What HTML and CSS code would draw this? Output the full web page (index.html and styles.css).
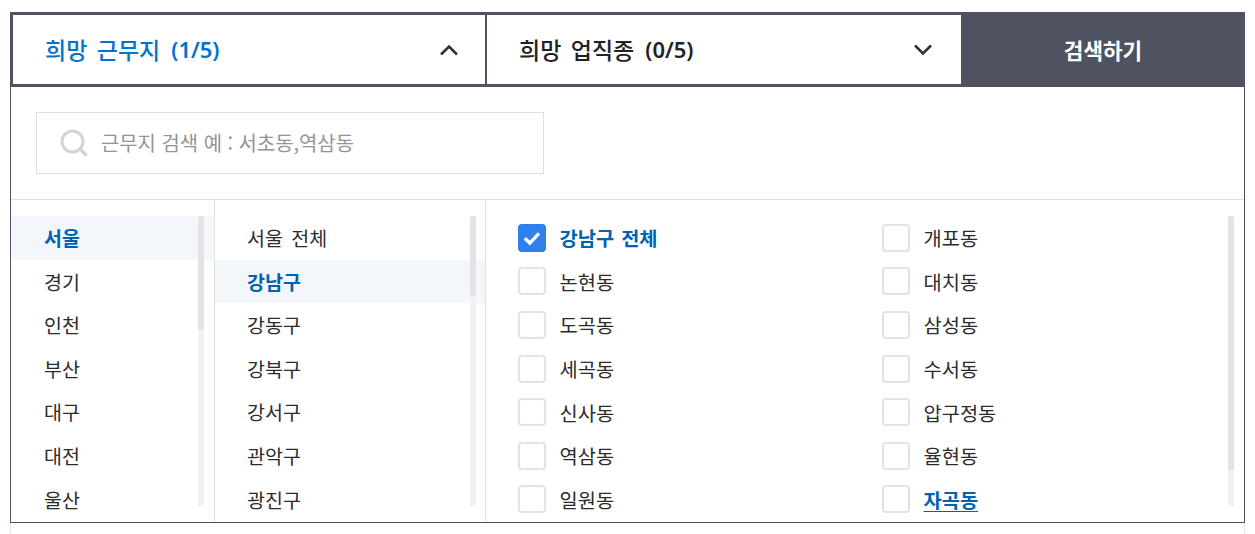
FILE: index.html
```html
<!DOCTYPE html>
<html lang="ko">
<head>
<meta charset="utf-8">
<title>희망 근무지 검색</title>
<link rel="stylesheet" href="styles.css">
</head>
<body>
<div class="finder">
  <div class="bar">
    <button class="tab tab-open" type="button"><span class="tab-label">희망 근무지<span class="count">(1/5)</span></span>
      <svg class="chev" viewBox="0 0 20 12" width="20" height="12"><path d="M2 10.5 10 2.5l8 8" fill="none" stroke="#333" stroke-width="2.6"/></svg></button>
    <button class="tab tab-closed" type="button"><span class="tab-label">희망 업직종<span class="count">(0/5)</span></span>
      <svg class="chev" viewBox="0 0 20 12" width="20" height="12"><path d="M2 1.5l8 8 8-8" fill="none" stroke="#333" stroke-width="2.6"/></svg></button>
    <button class="go" type="button">검색하기</button>
  </div>
  <div class="panel">
    <div class="search-row">
      <label class="search">
        <svg viewBox="0 0 28 28" width="28" height="28"><circle cx="12.5" cy="12.5" r="10.5" fill="none" stroke="#d4d4d4" stroke-width="3"/><path d="M20 20l6.5 6.5" stroke="#d4d4d4" stroke-width="3.4" fill="none"/></svg>
        <input class="search-input" type="text" placeholder="근무지 검색 예 : 서초동,역삼동">
      </label>
    </div>
    <div class="cols">
      <div class="col col-city">
        <ul class="list">
          <li class="row on">서울</li><li class="row">경기</li><li class="row">인천</li><li class="row">부산</li><li class="row">대구</li><li class="row">대전</li><li class="row">울산</li>
        </ul>
        <div class="track track-city"><div class="thumb thumb-city"></div></div>
      </div>
      <div class="col col-gu">
        <ul class="list">
          <li class="row">서울 전체</li><li class="row on">강남구</li><li class="row">강동구</li><li class="row">강북구</li><li class="row">강서구</li><li class="row">관악구</li><li class="row">광진구</li>
        </ul>
        <div class="track track-gu"><div class="thumb thumb-gu"></div></div>
      </div>
      <div class="col col-dong">
        <ul class="dong-grid">
          <li class="dong sel"><span class="box checked"><svg viewBox="0 0 28 28" width="28" height="28"><path d="M6.8 14.3l5 4.8 9.2-9.8" fill="none" stroke="#fff" stroke-width="3.4"/></svg></span>강남구 전체</li>
          <li class="dong"><span class="box"></span>개포동</li>
          <li class="dong"><span class="box"></span>논현동</li>
          <li class="dong"><span class="box"></span>대치동</li>
          <li class="dong"><span class="box"></span>도곡동</li>
          <li class="dong"><span class="box"></span>삼성동</li>
          <li class="dong"><span class="box"></span>세곡동</li>
          <li class="dong"><span class="box"></span>수서동</li>
          <li class="dong"><span class="box"></span>신사동</li>
          <li class="dong"><span class="box"></span>압구정동</li>
          <li class="dong"><span class="box"></span>역삼동</li>
          <li class="dong"><span class="box"></span>율현동</li>
          <li class="dong"><span class="box"></span>일원동</li>
          <li class="dong link"><span class="box"></span><span class="link-text">자곡동</span></li>
        </ul>
        <div class="track track-dong"><div class="thumb thumb-dong"></div></div>
      </div>
    </div>
  </div>
  <div class="after"></div>
</div>
</body>
</html>
```
FILE: styles.css
```css
* { box-sizing: border-box; }
html, body { margin: 0; padding: 0; background: #fff; height: 534px; overflow: hidden; }
body {
  padding: 12px 10px 0;
  font-family: "Noto Sans CJK KR", "Noto Sans", sans-serif;
  color: #333;
}
ul { list-style: none; margin: 0; padding: 0; }
.finder { width: 1235px; }
.bar { display: flex; height: 75px; }
.tab {
  display: flex;
  align-items: center;
  justify-content: space-between;
  height: 75px;
  margin: 0;
  background: #fff;
  border: solid #4f5260;
  border-width: 3px 0;
  font: 500 23px "Noto Sans CJK KR", sans-serif;
  word-spacing: 3px;
  color: #222;
  padding: 0 26px 2px 32px;
}
.tab-label { display: flex; align-items: center; gap: 11px; }
.tab-open {
  width: 477px;
  border-left-width: 3px;
  border-right-width: 2px;
  color: #0073cf;
}
.tab-closed { width: 474px; padding-right: 28px; }
.count { font: 600 22px "Noto Sans", sans-serif; }
.chev { flex: none; margin-top: 2px; }
.go {
  width: 284px;
  height: 75px;
  margin: 0;
  border: 0;
  background: #4f5260;
  color: #fff;
  font: 700 21.3px "Noto Sans CJK KR", sans-serif;
}
.panel {
  border: solid #4f5260;
  border-width: 0 1px 1px;
  height: 436px;
}
.search-row {
  height: 113px;
  padding: 25px 0 0 25px;
  border-bottom: 1px solid #dfdfdf;
}
.search {
  display: flex;
  align-items: center;
  gap: 13px;
  width: 508px;
  height: 62px;
  padding-left: 23px;
  border: 1px solid #dfdfdf;
}
.search svg { flex: none; }
.search-input {
  flex: 1;
  min-width: 0;
  height: 58px;
  margin-bottom: 2px;
  border: 0;
  outline: 0;
  padding: 0;
  font: 400 19.9px "Noto Sans CJK KR", sans-serif;
  color: #333;
}
.search-input::placeholder { color: #949494; opacity: 1; }
.cols { display: flex; height: 322px; overflow: hidden; }
.col { position: relative; padding-top: 16px; flex: none; height: 322px; }
.col-city { width: 204px; border-right: 1px solid #dfdfdf; }
.col-gu { width: 271px; border-right: 1px solid #dfdfdf; }
.col-dong { flex: 1; padding-left: 32px; }
.row {
  height: 43.6px;
  line-height: 43.2px;
  font-size: 19.5px;
  word-spacing: 3px;
  color: #2b2b2b;
}
.col-city .row { padding-left: 33px; }
.col-gu .row { padding-left: 32px; }
.row.on {
  background: #f3f7fb;
  color: #0062b3;
  font-weight: 700;
}
.dong-grid { display: grid; grid-template-columns: 364px 1fr; grid-auto-rows: 43.6px; }
.dong {
  display: flex;
  align-items: center;
  gap: 13.5px;
  font-size: 19.8px;
  word-spacing: 1.5px;
  color: #2b2b2b;
}
.dong.sel { color: #0062b3; font-weight: 700; }
.box {
  flex: none;
  width: 28px;
  height: 28px;
  border: 2px solid #e3e3e3;
  border-radius: 4px;
  background: #fff;
}
.box.checked { border: 0; background: #2f80ed; }
.box svg { display: block; }
.link-text { color: #0062b3; font-weight: 700; text-decoration: underline; text-underline-offset: 3px; }
.track {
  position: absolute;
  top: 16px;
  height: 291px;
  border-radius: 3px;
  background: #f1f1f1;
}
.thumb { width: 100%; border-radius: 3px; background: #e3e3e3; }
.track-city { left: 187px; width: 6px; }
.track-gu { left: 255px; width: 6px; }
.track-dong { right: 10px; width: 6px; }
.thumb-city { height: 114px; }
.thumb-gu { height: 80px; }
.thumb-dong { height: 254px; }
.after {
  height: 12px;
  border: solid #e6e6e6;
  border-width: 0 1px;
}
```
